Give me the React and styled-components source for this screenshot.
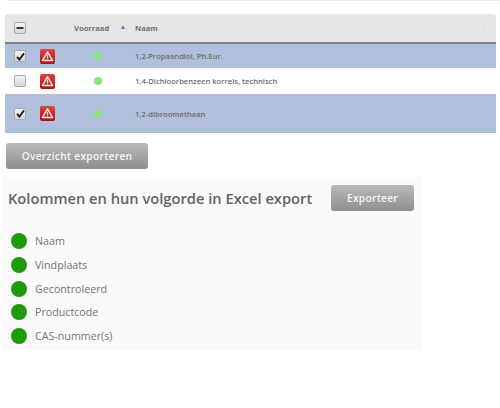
import React from "react";
import styled, { createGlobalStyle } from "styled-components";

const GlobalStyle = createGlobalStyle`
  html, body {
    margin: 0;
    padding: 0;
    background: #fff;
  }
  body {
    font-family: "Open Sans", "Liberation Sans", sans-serif;
    color: #666;
  }
`;

const Page = styled.div`
  width: 500px;
  height: 408px;
  overflow: hidden;
`;

const TopLine = styled.div`
  height: 1px;
  margin-left: 8px;
  background: #ececec;
`;

const Table = styled.div`
  margin: 13px 4px 0 5px;
`;

const gridColumns = `
  display: grid;
  grid-template-columns: 28px 28px 59px 6px 1fr 14px;
  align-items: center;
`;

const HeaderRow = styled.div`
  ${gridColumns}
  height: 28px;
  background: #e5e5e5;
  border-radius: 3px 3px 0 0;
  border-bottom: 2px solid #7b7f88;
  font-size: 7.6px;
  font-weight: 700;
  color: #6f6f6f;
`;

const Row = styled.div`
  ${gridColumns}
  height: ${(p) => p.$height}px;
  background: ${(p) => (p.$selected ? "#b0bfdb" : "#fff")};
  font-size: 7.6px;
  font-weight: 600;
  color: #6e6e6e;
`;

const Cell = styled.div`
  display: flex;
  align-items: center;
  justify-content: ${(p) => (p.$center ? "center" : "flex-start")};
  white-space: nowrap;
`;

const StockLabel = styled(Cell)`
  padding-left: 13px;
`;

const NameCell = styled(Cell)`
  padding-left: 9px;
`;

const Check = styled.span`
  width: 10px;
  height: 10px;
  display: flex;
  align-items: center;
  justify-content: center;
  margin-left: 9px;
  background: linear-gradient(#f4f4f4, #d6d6d6);
  border: 1px solid #a9a9a9;
  border-radius: 2px;
`;

const StockDot = styled.span`
  width: 8px;
  height: 8px;
  margin-left: 33px;
  border-radius: 50%;
  background: #86e47f;
`;

const SortArrow = styled.span`
  width: 0;
  height: 0;
  margin-top: -3px;
  border-left: 2.5px solid transparent;
  border-right: 2.5px solid transparent;
  border-bottom: 4px solid #7a73c4;
`;

const FaintSort = styled.span`
  color: #d2d2d2;
  font-size: 7px;
  line-height: 1;
`;

const ActionButton = styled.button`
  display: block;
  flex-shrink: 0;
  width: ${(p) => p.$width}px;
  height: 26px;
  padding: 0;
  border: none;
  border-radius: 3px;
  background: linear-gradient(#b9b9b9, #8f8f8f);
  color: #f4f4f4;
  font-family: inherit;
  font-size: 10.2px;
  font-weight: 600;
  letter-spacing: 0.3px;
`;

const ExportRow = styled.div`
  margin: 10px 0 8px 6px;
`;

const Panel = styled.section`
  width: 420px;
  height: 173px;
  margin-left: 2px;
  background: #fafafa;
  box-sizing: border-box;
  padding: 8px 8px 0 6px;
`;

const PanelHeader = styled.div`
  display: flex;
  align-items: center;
  justify-content: space-between;
  height: 26px;
`;

const Title = styled.h2`
  margin: -1px 0 0;
  font-size: 14.7px;
  font-weight: 600;
  color: #636363;
  white-space: nowrap;
`;

const ColumnList = styled.ul`
  list-style: none;
  margin: 22px 0 0;
  padding: 0 0 0 3px;
  display: flex;
  flex-direction: column;
  gap: 7.8px;
`;

const ColumnItem = styled.li`
  display: flex;
  align-items: center;
  gap: 8px;
  height: 16px;
  font-size: 10.7px;
  color: #757575;
`;

const GreenDot = styled.span`
  width: 16px;
  height: 16px;
  border-radius: 50%;
  background: #1f9a0c;
`;

const MinusIcon = () => (
  <svg width="8" height="8" viewBox="0 0 8 8">
    <rect x="0.5" y="3" width="7" height="2" fill="#333" />
  </svg>
);

const TickIcon = () => (
  <svg width="9" height="9" viewBox="0 0 9 9">
    <path d="M1 4.8 L3.4 7.6 L8 1.4" fill="none" stroke="#222" strokeWidth="1.9" />
  </svg>
);

const WarningIcon = () => (
  <svg width="15" height="15" viewBox="0 0 15 15">
    <defs>
      <linearGradient id="warnBg" x1="0" y1="0" x2="0" y2="1">
        <stop offset="0" stopColor="#e8423e" />
        <stop offset="1" stopColor="#b01212" />
      </linearGradient>
    </defs>
    <rect width="15" height="15" rx="2" fill="url(#warnBg)" />
    <path
      d="M7.5 2.8 L12.6 11.6 L2.4 11.6 Z"
      fill="none"
      stroke="#f7e6e4"
      strokeWidth="1.5"
      strokeLinejoin="round"
    />
    <rect x="6.9" y="5.8" width="1.2" height="3" fill="#f7e6e4" />
    <rect x="6.9" y="9.4" width="1.2" height="1.1" fill="#f7e6e4" />
  </svg>
);

const products = [
  { name: "1,2-Propaandiol, Ph.Eur.", selected: true, height: 24 },
  { name: "1,4-Dichloorbenzeen korrels, technisch", selected: false, height: 26 },
  { name: "1,2-dibroomethaan", selected: true, height: 39 },
];

const columns = ["Naam", "Vindplaats", "Gecontroleerd", "Productcode", "CAS-nummer(s)"];

export default function App() {
  return (
    <Page>
      <GlobalStyle />
      <TopLine />
      <Table>
        <HeaderRow>
          <Cell>
            <Check>
              <MinusIcon />
            </Check>
          </Cell>
          <Cell />
          <StockLabel>Voorraad</StockLabel>
          <Cell $center>
            <SortArrow />
          </Cell>
          <NameCell>Naam</NameCell>
          <Cell>
            <FaintSort>↕</FaintSort>
          </Cell>
        </HeaderRow>
        {products.map((p) => (
          <Row key={p.name} $selected={p.selected} $height={p.height}>
            <Cell>
              <Check>{p.selected && <TickIcon />}</Check>
            </Cell>
            <Cell $center>
              <WarningIcon />
            </Cell>
            <Cell>
              <StockDot />
            </Cell>
            <Cell />
            <NameCell>{p.name}</NameCell>
            <Cell />
          </Row>
        ))}
      </Table>
      <ExportRow>
        <ActionButton $width={142}>Overzicht exporteren</ActionButton>
      </ExportRow>
      <Panel>
        <PanelHeader>
          <Title>Kolommen en hun volgorde in Excel export</Title>
          <ActionButton $width={83}>Exporteer</ActionButton>
        </PanelHeader>
        <ColumnList>
          {columns.map((c) => (
            <ColumnItem key={c}>
              <GreenDot />
              {c}
            </ColumnItem>
          ))}
        </ColumnList>
      </Panel>
    </Page>
  );
}
